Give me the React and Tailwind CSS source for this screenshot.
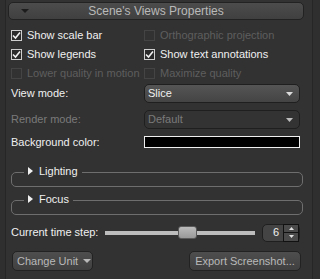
import React from 'react';

const font = { fontFamily: '"Liberation Sans", Arial, sans-serif' };

function Check({ checked, disabled, label }) {
  return (
    <div className="flex items-center h-[19px] gap-[5px] whitespace-nowrap">
      <div
        className={`w-[11px] h-[11px] border flex items-center justify-center ${
          disabled ? 'border-[#444444]' : 'border-[#cfcfcf] bg-[#2a2a2a]'
        }`}
      >
        {checked && (
          <svg width="9" height="9" viewBox="0 0 9 9">
            <path d="M1 4.5 L3.5 7 L8 1.5" fill="none" stroke="#f0f0f0" strokeWidth="1.6" />
          </svg>
        )}
      </div>
      <span className={disabled ? 'text-[#5e5e5e]' : 'text-[#f0f0f0]'}>{label}</span>
    </div>
  );
}

function Combo({ value, disabled }) {
  return (
    <div
      className={`w-[156px] h-[19px] rounded-[5px] border border-[#1f1f1f] flex items-center justify-between pl-[3px] pr-[6px] ${
        disabled ? 'bg-[#333333] text-[#7a7a7a]' : 'bg-gradient-to-b from-[#555555] to-[#444444] text-[#f0f0f0]'
      }`}
    >
      <span>{value}</span>
      <svg width="7" height="4" viewBox="0 0 7 4">
        <path d="M0 0 H7 L3.5 4 Z" fill={disabled ? '#bdbdbd' : '#dcdcdc'} />
      </svg>
    </div>
  );
}

function Group({ label }) {
  return (
    <div className="relative h-[28px] ml-[5px] w-[292px]">
      <div className="absolute left-0 right-0 top-[12px] h-[15px] rounded-[5px] border border-[#6e6e6e]" />
      <div className="absolute left-[13px] top-[4px] flex items-center gap-[6px] bg-[#323232] pl-[4px] pr-[4px]">
        <svg width="5" height="8" viewBox="0 0 5 8">
          <path d="M0 0 L5 4 L0 8 Z" fill="#f0f0f0" />
        </svg>
        <span className="text-[#f0f0f0] leading-[14px]">{label}</span>
      </div>
    </div>
  );
}

export default function App() {
  return (
    <div className="w-[320px] h-[279px] bg-[#2f2f2f] flex pl-[5px] text-[11px] whitespace-nowrap" style={font}>
      <div className="w-[308px] h-full bg-[#323232] border-x border-[#262626] flex flex-col">
        <div className="ml-[2px] mt-[2px] w-[296px] h-[18px] rounded-[5px] border border-[#222222] bg-gradient-to-b from-[#4c4c4c] to-[#404040] relative flex items-center justify-center">
          <svg className="absolute left-[12px] top-[6px]" width="8" height="4" viewBox="0 0 8 4">
            <path d="M0 0 H8 L4 4 Z" fill="#1c1c1c" />
          </svg>
          <span className="text-[#b9b9b9] text-[12px]">Scene's Views Properties</span>
        </div>

        <div className="grid grid-cols-[133px_1fr] pl-[5px] mt-[6px]">
          <Check checked label="Show scale bar" />
          <Check disabled label="Orthographic projection" />
          <Check checked label="Show legends" />
          <Check checked label="Show text annotations" />
          <Check disabled label="Lower quality in motion" />
          <Check disabled label="Maximize quality" />
        </div>

        <div className="flex flex-col pl-[5px] mt-[1px] gap-[7px]">
          <div className="flex items-center justify-between w-[289px]">
            <span className="text-[#f0f0f0]">View mode:</span>
            <Combo value="Slice" />
          </div>
          <div className="flex items-center justify-between w-[289px]">
            <span className="text-[#7a7a7a]">Render mode:</span>
            <Combo value="Default" disabled />
          </div>
          <div className="flex items-center justify-between w-[289px] h-[12px]">
            <span className="text-[#f0f0f0]">Background color:</span>
            <div className="w-[156px] h-[12px] bg-black border border-[#f0f0f0]" />
          </div>
        </div>

        <div className="mt-[12px] flex flex-col">
          <Group label="Lighting" />
          <Group label="Focus" />
        </div>

        <div className="flex items-center pl-[5px] mt-[7px] h-[19px]">
          <span className="text-[#f0f0f0] w-[94px]">Current time step:</span>
          <div className="relative w-[150px] h-[14px] flex items-center">
            <div className="w-full h-[4px] bg-[#bdbdbd]" />
            <div className="absolute left-[73px] top-0 w-[19px] h-[13px] rounded-[3px] border border-[#5a5a5a] bg-gradient-to-b from-[#bbbbbb] to-[#999999]" />
          </div>
          <div className="ml-[7px] w-[38px] h-[18px] rounded-[5px] border border-[#1f1f1f] bg-[#444444] flex items-center justify-end">
            <span className="text-[#f0f0f0] mr-[4px]">6</span>
            <div className="w-[16px] h-[18px] border border-[#111111] flex flex-col">
              <div className="flex-1 bg-[#4a4a4a] border-b border-[#111111] flex items-center justify-center">
                <svg width="5" height="3" viewBox="0 0 5 3"><path d="M0 3 L2.5 0 L5 3 Z" fill="#e0e0e0" /></svg>
              </div>
              <div className="flex-1 bg-[#4a4a4a] flex items-center justify-center">
                <svg width="5" height="3" viewBox="0 0 5 3"><path d="M0 0 H5 L2.5 3 Z" fill="#e0e0e0" /></svg>
              </div>
            </div>
          </div>
        </div>

        <div className="flex items-center justify-between pl-[6px] w-[295px] mt-[9px]">
          <div className="w-[81px] h-[20px] rounded-[5px] border border-[#222222] bg-gradient-to-b from-[#4e4e4e] to-[#404040] flex items-center pl-[4px] gap-[5px]">
            <span className="text-[#b9b9b9]">Change Unit</span>
            <svg width="8" height="4" viewBox="0 0 8 4"><path d="M0 0 H8 L4 4 Z" fill="#b9b9b9" /></svg>
          </div>
          <div className="w-[112px] h-[20px] rounded-[5px] border border-[#222222] bg-gradient-to-b from-[#4e4e4e] to-[#404040] flex items-center justify-center">
            <span className="text-[#b9b9b9]">Export Screenshot...</span>
          </div>
        </div>
      </div>
    </div>
  );
}
